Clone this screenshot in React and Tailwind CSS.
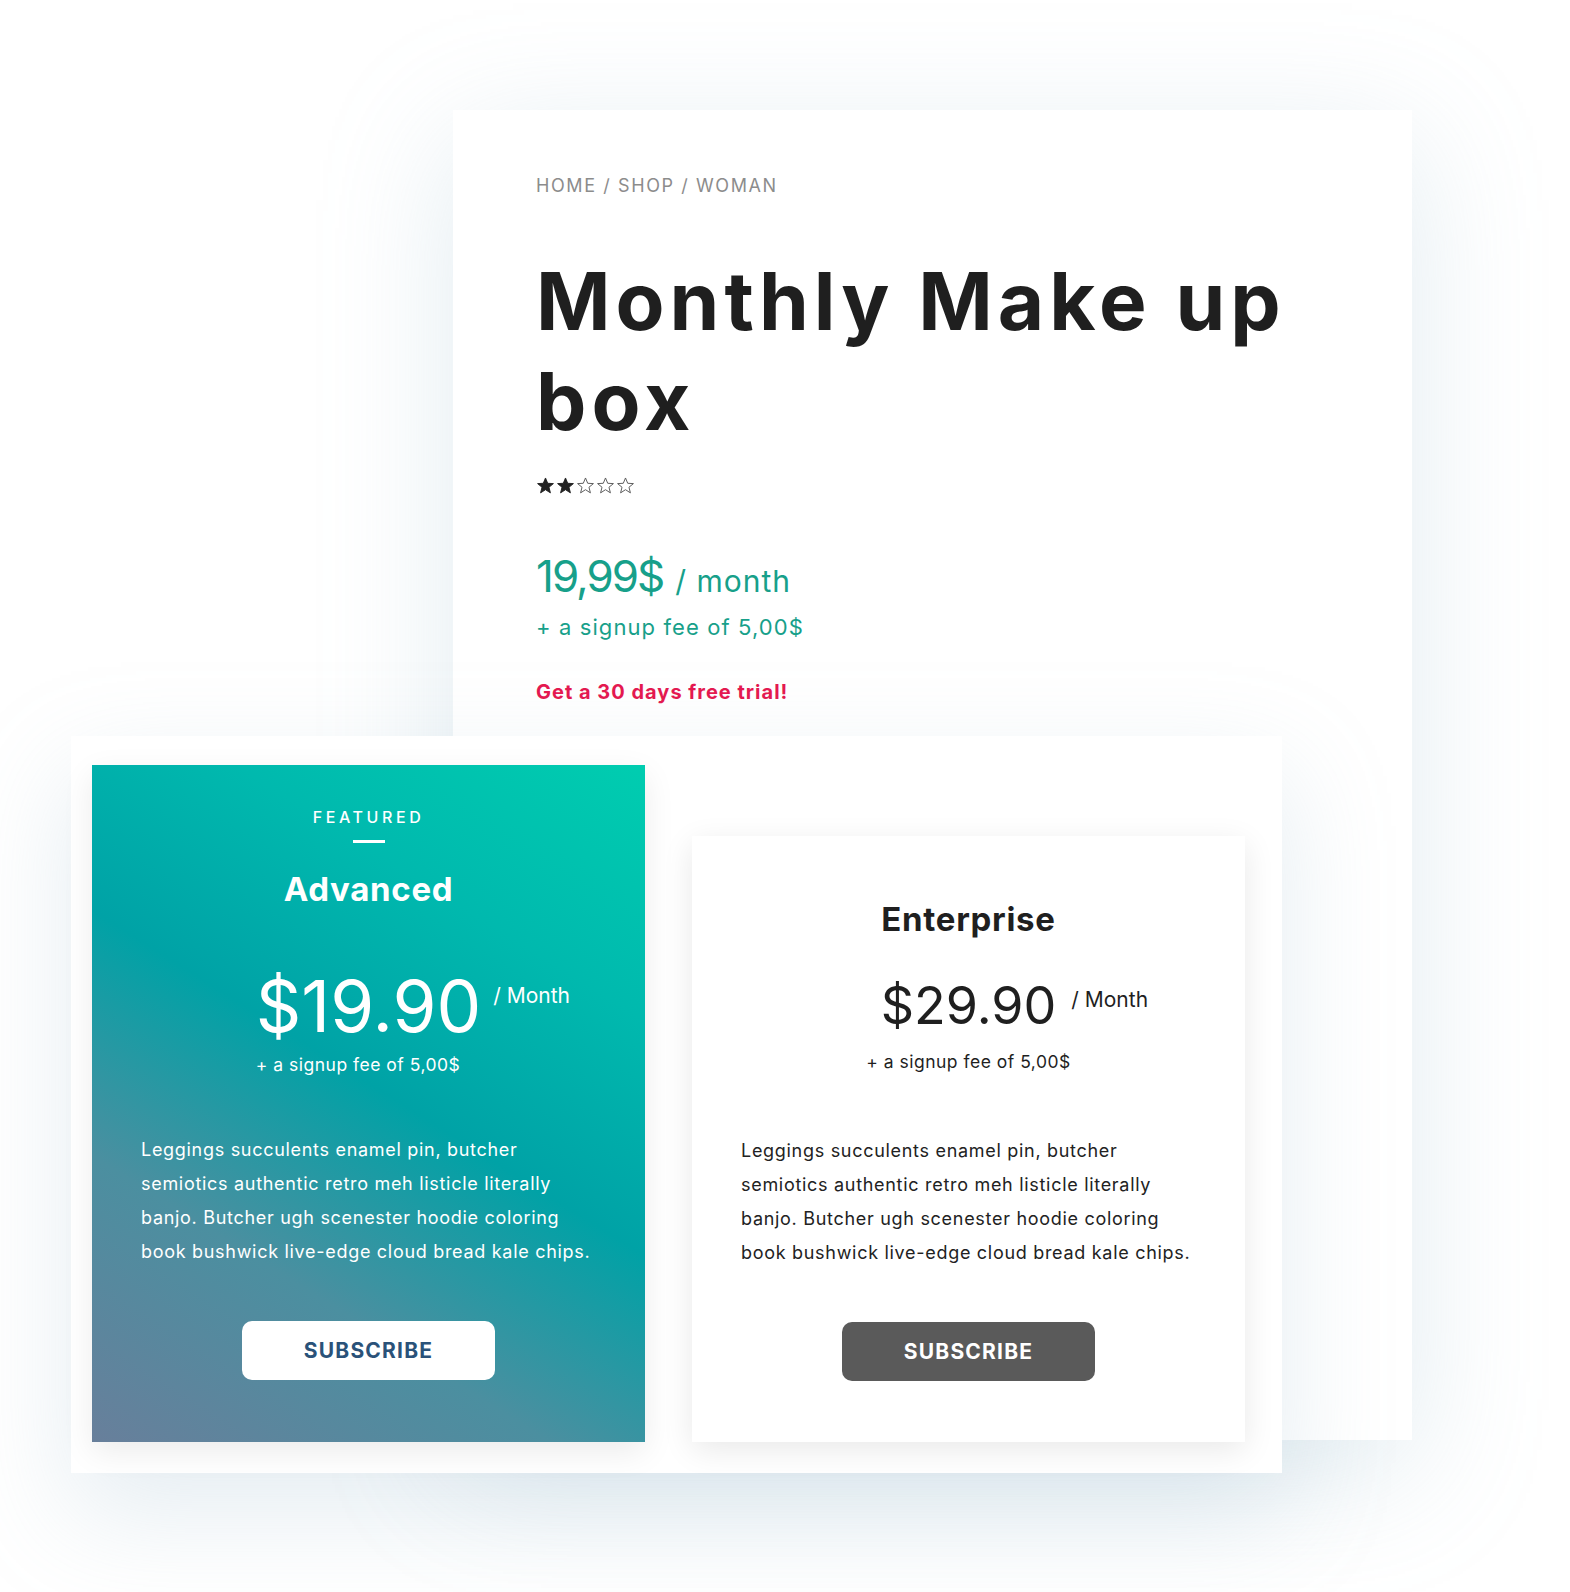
import React from "react";

const Star = ({ filled }) => (
  <svg width="19" height="19" viewBox="0 0 24 24" className="block">
    <polygon
      points="12,2.5 14.8,9.2 22,9.6 16.4,14.2 18.2,21.3 12,17.3 5.8,21.3 7.6,14.2 2,9.6 9.2,9.2"
      fill={filled ? "#222" : "none"}
      stroke={filled ? "#222" : "#555"}
      strokeWidth="1.2"
      strokeLinejoin="miter"
    />
  </svg>
);

const desc = (
  <>
    Leggings succulents enamel pin, butcher
    <br />
    semiotics authentic retro meh listicle literally
    <br />
    banjo. Butcher ugh scenester hoodie coloring
    <br />
    book bushwick live-edge cloud bread kale chips.
  </>
);

export default function App() {
  return (
    <div
      className="relative w-[1570px] h-[1592px] bg-white overflow-hidden"
      style={{ fontFamily: "Inter, 'Noto Sans', sans-serif" }}
    >
      {/* back panel */}
      <div className="ml-[453px] mt-[110px] w-[959px] h-[1330px] bg-white shadow-[0_30px_120px_rgba(150,185,205,0.28)] pl-[83px] pt-[64px]">
        <div className="text-[18px] leading-[24px] tracking-[1.6px] text-[#8c8c8c]">
          HOME / SHOP / WOMAN
        </div>
        <h1 className="mt-[53px] text-[80px] leading-[100px] font-bold text-[#1f1f1f] tracking-[5px]">
          Monthly Make up
          <br />
          box
        </h1>
        <div className="mt-[25px] flex gap-[1px]">
          <Star filled />
          <Star filled />
          <Star />
          <Star />
          <Star />
        </div>
        <div className="mt-[53px] flex items-baseline text-[#17a08a]">
          <span className="text-[44px] leading-[56px] tracking-[-2px]">19,99$</span>
          <span className="ml-[12px] text-[30px] leading-[40px] tracking-[1px]">/ month</span>
        </div>
        <div className="mt-[8px] text-[22px] leading-[30px] text-[#17a08a] tracking-[1.1px]">
          + a signup fee of 5,00$
        </div>
        <div className="mt-[36px] text-[20px] leading-[28px] font-bold text-[#e5184f] tracking-[1px]">
          Get a 30 days free trial!
        </div>
      </div>

      {/* front panel */}
      <div className="absolute left-[71px] top-[736px] w-[1211px] h-[737px] bg-white shadow-[0_40px_100px_rgba(150,185,205,0.25)] flex items-end pl-[21px] pb-[31px]">
        {/* featured card */}
        <div className="w-[553px] h-[677px] bg-[linear-gradient(32deg,#687f9b_0%,#4b8fa0_28%,#00a2a6_52%,#00b9ae_75%,#00cdb0_100%)] shadow-[0_10px_30px_rgba(0,0,0,0.08)] flex flex-col items-center text-white pt-[42px]">
          <div className="text-[16px] leading-[20px] tracking-[3.6px] font-medium">FEATURED</div>
          <div className="mt-[13px] w-[32px] h-[3px] bg-white" />
          <div className="mt-[26px] text-[33px] leading-[40px] font-bold tracking-[0.7px]">Advanced</div>
          <div className="mt-[57px] flex flex-col items-start">
            <div className="relative text-[71px] leading-[80px] font-normal">
              $19.90
              <span className="absolute left-full top-[16px] ml-[12px] whitespace-nowrap text-[21px] leading-[28px]">
                / Month
              </span>
            </div>
            <div className="mt-[7px] text-[17.5px] leading-[24px] tracking-[0.5px] whitespace-nowrap">
              + a signup fee of 5,00$
            </div>
          </div>
          <p className="mt-[56px] self-start ml-[49px] text-[18px] leading-[34px] tracking-[0.7px] text-white whitespace-nowrap">
            {desc}
          </p>
          <button className="mt-[52px] w-[253px] h-[59px] rounded-[10px] bg-white text-[#2a5279] text-[21px] font-bold tracking-[1.2px]">
            SUBSCRIBE
          </button>
        </div>

        {/* enterprise card */}
        <div className="ml-[47px] w-[553px] h-[606px] bg-white shadow-[0_8px_30px_rgba(0,0,0,0.09)] flex flex-col items-center text-[#1f1f1f] pt-[63px]">
          <div className="text-[33px] leading-[40px] font-bold tracking-[0.7px]">Enterprise</div>
          <div className="mt-[37px] flex flex-col items-center">
            <div className="relative text-[52px] leading-[60px] font-normal">
              $29.90
              <span className="absolute left-full top-[10px] ml-[15px] whitespace-nowrap text-[21px] leading-[28px]">
                / Month
              </span>
            </div>
            <div className="mt-[14px] text-[17.5px] leading-[24px] tracking-[0.5px] whitespace-nowrap">
              + a signup fee of 5,00$
            </div>
          </div>
          <p className="mt-[60px] self-start ml-[49px] text-[18px] leading-[34px] tracking-[0.7px] text-[#222] whitespace-nowrap">
            {desc}
          </p>
          <button className="mt-[52px] w-[253px] h-[59px] rounded-[10px] bg-[#5a5a5a] text-white text-[21px] font-bold tracking-[1.2px]">
            SUBSCRIBE
          </button>
        </div>
      </div>
    </div>
  );
}
